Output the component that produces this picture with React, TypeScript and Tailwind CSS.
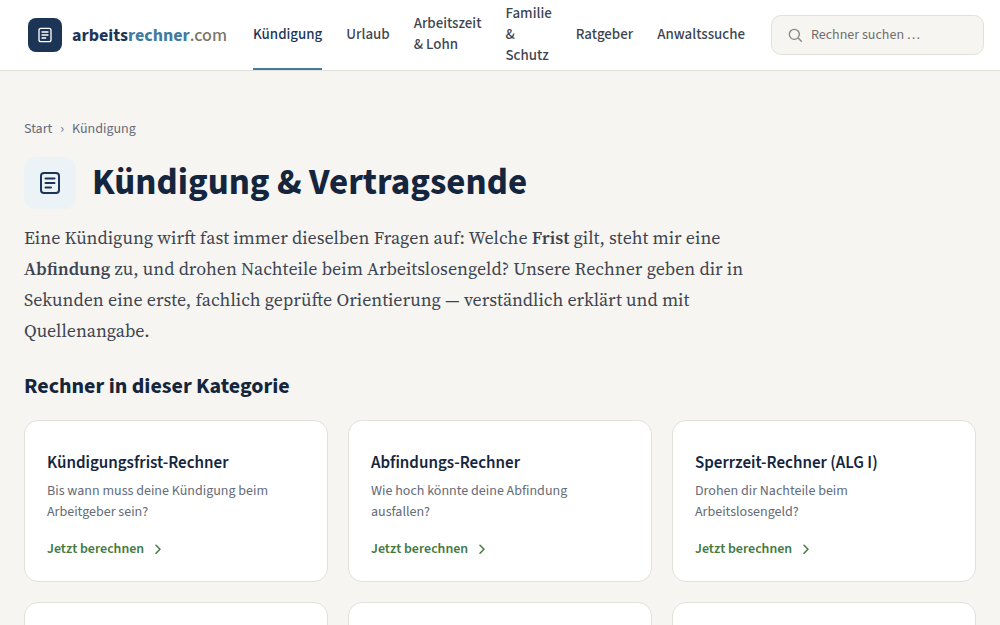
import React from 'react';

interface NavItem {
  label: string;
  active?: boolean;
}

interface Calculator {
  title: string;
  description: string;
}

const navItems: NavItem[] = [
  { label: 'Kündigung', active: true },
  { label: 'Urlaub' },
  { label: 'Arbeitszeit & Lohn' },
  { label: 'Familie & Schutz' },
  { label: 'Ratgeber' },
  { label: 'Anwaltssuche' },
];

const calculators: Calculator[] = [
  {
    title: 'Kündigungsfrist-Rechner',
    description: 'Bis wann muss deine Kündigung beim Arbeitgeber sein?',
  },
  {
    title: 'Abfindungs-Rechner',
    description: 'Wie hoch könnte deine Abfindung ausfallen?',
  },
  {
    title: 'Sperrzeit-Rechner (ALG I)',
    description: 'Drohen dir Nachteile beim Arbeitslosengeld?',
  },
];

const DocumentIcon: React.FC<{ className: string }> = ({ className }) => (
  <svg
    className={className}
    viewBox="0 0 24 24"
    fill="none"
    stroke="currentColor"
    strokeWidth="2"
    strokeLinecap="round"
    strokeLinejoin="round"
    aria-hidden="true">
    <rect x="3" y="2" width="18" height="20" rx="3" />
    <path d="M7.5 7.5h9M7.5 12h9M7.5 16.5h5.5" />
  </svg>
);

const SearchIcon: React.FC = () => (
  <svg
    className="size-4 shrink-0 text-[#85858a]"
    viewBox="0 0 24 24"
    fill="none"
    stroke="currentColor"
    strokeWidth="2"
    strokeLinecap="round"
    aria-hidden="true">
    <circle cx="11" cy="11" r="7.5" />
    <path d="m17 17 4.5 4.5" />
  </svg>
);

const ChevronIcon: React.FC = () => (
  <svg
    className="size-4"
    viewBox="0 0 24 24"
    fill="none"
    stroke="currentColor"
    strokeWidth="2.2"
    strokeLinecap="round"
    strokeLinejoin="round"
    aria-hidden="true">
    <path d="m9 5 6 6-6 6" />
  </svg>
);

const Header: React.FC = () => (
  <header className="border-b border-[#e2e0db] bg-white">
    <div className="flex h-[70px] items-center gap-[26px] pr-4 pl-7">
      <a href="#" className="flex shrink-0 items-center gap-[10px]">
        <span className="flex size-[34px] items-center justify-center rounded-lg bg-[#1c3557] text-white">
          <DocumentIcon className="size-4" />
        </span>
        <span className="text-lg leading-[27px] font-bold text-[#1c3557]">
          arbeits<span className="text-[#417ba0]">rechner</span>
          <span className="font-medium text-[#7b7468]">.com</span>
        </span>
      </a>

      <nav className="flex h-full gap-6">
        {navItems.map((item) => (
          <a
            key={item.label}
            href="#"
            className={`flex w-min items-center border-b-2 text-[15px] leading-[21px] font-medium xl:w-auto ${
              item.active ? 'border-[#417ba0] text-[#1c3557]' : 'border-transparent text-[#3d4450]'
            }`}>
            {item.label}
          </a>
        ))}
      </nav>

      <label className="flex h-10 min-w-0 flex-1 items-center gap-2 rounded-[10px] border border-[#e2e0db] bg-[#f6f5f1] px-[15px]">
        <SearchIcon />
        <input
          type="search"
          aria-label="Rechner suchen …"
          placeholder="Rechner suchen …"
          className="h-full w-full min-w-0 bg-transparent text-sm outline-none placeholder:text-[#706e6b]"
        />
      </label>
    </div>
  </header>
);

const CalculatorCard: React.FC<{ calculator: Calculator }> = ({ calculator }) => (
  <li className="flex flex-col items-start rounded-[14px] border border-[#e2e0db] bg-white px-[22px] pt-[30px] pb-[21px]">
    <h3 className="text-[17px] leading-6 font-semibold text-[#14253d]">{calculator.title}</h3>
    <p className="mt-[6px] pr-6 text-sm leading-[21px] text-[#656b78]">{calculator.description}</p>
    <a
      href="#"
      className="mt-4 flex items-center gap-[6px] text-sm leading-[21px] font-semibold text-[#42793f]">
      Jetzt berechnen
      <ChevronIcon />
    </a>
  </li>
);

const App: React.FC = () => (
  <div className="min-h-screen bg-[#f6f5f1] font-['Source_Sans_3','Source_Sans_Pro','Noto_Sans_CJK_SC',sans-serif]">
    <Header />

    <main className="mx-auto max-w-[1160px] px-6 pt-12">
      <nav className="flex gap-2 text-sm leading-[21px] text-[#656b78]">
        <a href="#">Start</a>
        <span>›</span>
        <span>Kündigung</span>
      </nav>

      <div className="mt-[17px] flex items-center gap-4">
        <span className="flex size-[52px] items-center justify-center rounded-xl bg-[#ebf3f7] text-[#1c3557]">
          <DocumentIcon className="size-6" />
        </span>
        <h1 className="text-[37px] leading-[46px] font-bold text-[#14253d]">
          Kündigung &amp; Vertragsende
        </h1>
      </div>

      <p className="mt-[13px] max-w-[740px] font-['Source_Serif_4','Noto_Serif','Liberation_Serif',serif] text-lg leading-[31px] text-[#3d4450]">
        Eine Kündigung wirft fast immer dieselben Fragen auf: Welche{' '}
        <strong className="font-semibold">Frist</strong> gilt, steht mir eine{' '}
        <strong className="font-semibold">Abfindung</strong> zu, und drohen Nachteile beim
        Arbeitslosengeld? Unsere Rechner geben dir in Sekunden eine erste, fachlich geprüfte
        Orientierung — verständlich erklärt und mit Quellenangabe.
      </p>

      <h2 className="mt-6 text-[22px] leading-8 font-bold text-[#14253d]">
        Rechner in dieser Kategorie
      </h2>

      <ul className="mt-[18px] grid grid-cols-3 gap-5">
        {calculators.map((calculator) => (
          <CalculatorCard key={calculator.title} calculator={calculator} />
        ))}
        <li className="h-40 rounded-[14px] border border-[#e2e0db] bg-white" />
        <li className="h-40 rounded-[14px] border border-[#e2e0db] bg-white" />
        <li className="h-40 rounded-[14px] border border-[#e2e0db] bg-white" />
      </ul>
    </main>
  </div>
);

export default App;
